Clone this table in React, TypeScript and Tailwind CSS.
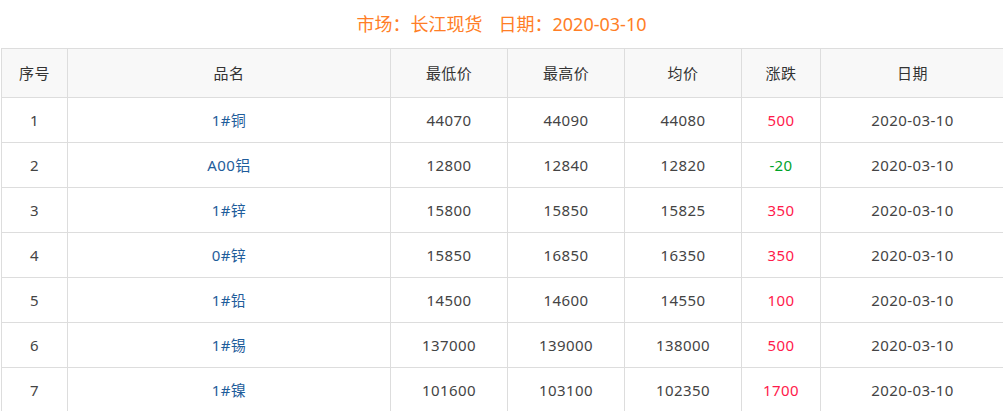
import React from "react";

// ---------------------------------------------------------------------------
// Data
// ---------------------------------------------------------------------------

type Row = {
  no: number;
  name: string;
  low: string;
  high: string;
  avg: string;
  change: string;
  date: string;
};

const rows: Row[] = [
  { no: 1, name: "1#铜", low: "44070", high: "44090", avg: "44080", change: "500", date: "2020-03-10" },
  { no: 2, name: "A00铝", low: "12800", high: "12840", avg: "12820", change: "-20", date: "2020-03-10" },
  { no: 3, name: "1#锌", low: "15800", high: "15850", avg: "15825", change: "350", date: "2020-03-10" },
  { no: 4, name: "0#锌", low: "15850", high: "16850", avg: "16350", change: "350", date: "2020-03-10" },
  { no: 5, name: "1#铅", low: "14500", high: "14600", avg: "14550", change: "100", date: "2020-03-10" },
  { no: 6, name: "1#锡", low: "137000", high: "139000", avg: "138000", change: "500", date: "2020-03-10" },
  { no: 7, name: "1#镍", low: "101600", high: "103100", avg: "102350", change: "1700", date: "2020-03-10" },
];

const headers = ["序号", "品名", "最低价", "最高价", "均价", "涨跌", "日期"];
const widths = ["w-[66px]", "w-[323px]", "w-[117px]", "w-[117px]", "w-[117px]", "w-[79px]", "w-[184px]"];

// ---------------------------------------------------------------------------
// App
// ---------------------------------------------------------------------------

export default function App() {
  return (
    <div
      className="w-[1003px] h-[411px] overflow-hidden bg-white"
      style={{ fontFamily: '"Noto Sans", "Noto Sans CJK SC", sans-serif' }}
    >
      <h1 className="h-[48px] pt-[11px] text-center text-[18px] leading-[26px] text-[#ff7e26]">
        市场：长江现货<span className="ml-[16px]">日期：2020-03-10</span>
      </h1>

      <div className="pl-[1px]">
        <table className="table-fixed border-collapse w-[1003px] text-[15px] tracking-[0.4px] text-[#444]">
          <thead>
            <tr className="h-[49px] bg-[#f8f8f8]">
              {headers.map((h, i) => (
                <th
                  key={h}
                  className={`${widths[i]} border border-[#dddddd] font-normal text-center text-[#333]`}
                >
                  {h}
                </th>
              ))}
            </tr>
          </thead>
          <tbody>
            {rows.map((r) => (
              <tr key={r.no} className="h-[45px]">
                <td className="border border-[#dddddd] text-center">{r.no}</td>
                <td className="border border-[#dddddd] text-center text-[#1f5d9b]">{r.name}</td>
                <td className="border border-[#dddddd] text-center">{r.low}</td>
                <td className="border border-[#dddddd] text-center">{r.high}</td>
                <td className="border border-[#dddddd] text-center">{r.avg}</td>
                <td
                  className={`border border-[#dddddd] text-center ${
                    r.change.startsWith("-") ? "text-[#00a32a]" : "text-[#ff1a4b]"
                  }`}
                >
                  {r.change}
                </td>
                <td className="border border-[#dddddd] text-center">{r.date}</td>
              </tr>
            ))}
          </tbody>
        </table>
      </div>
    </div>
  );
}
